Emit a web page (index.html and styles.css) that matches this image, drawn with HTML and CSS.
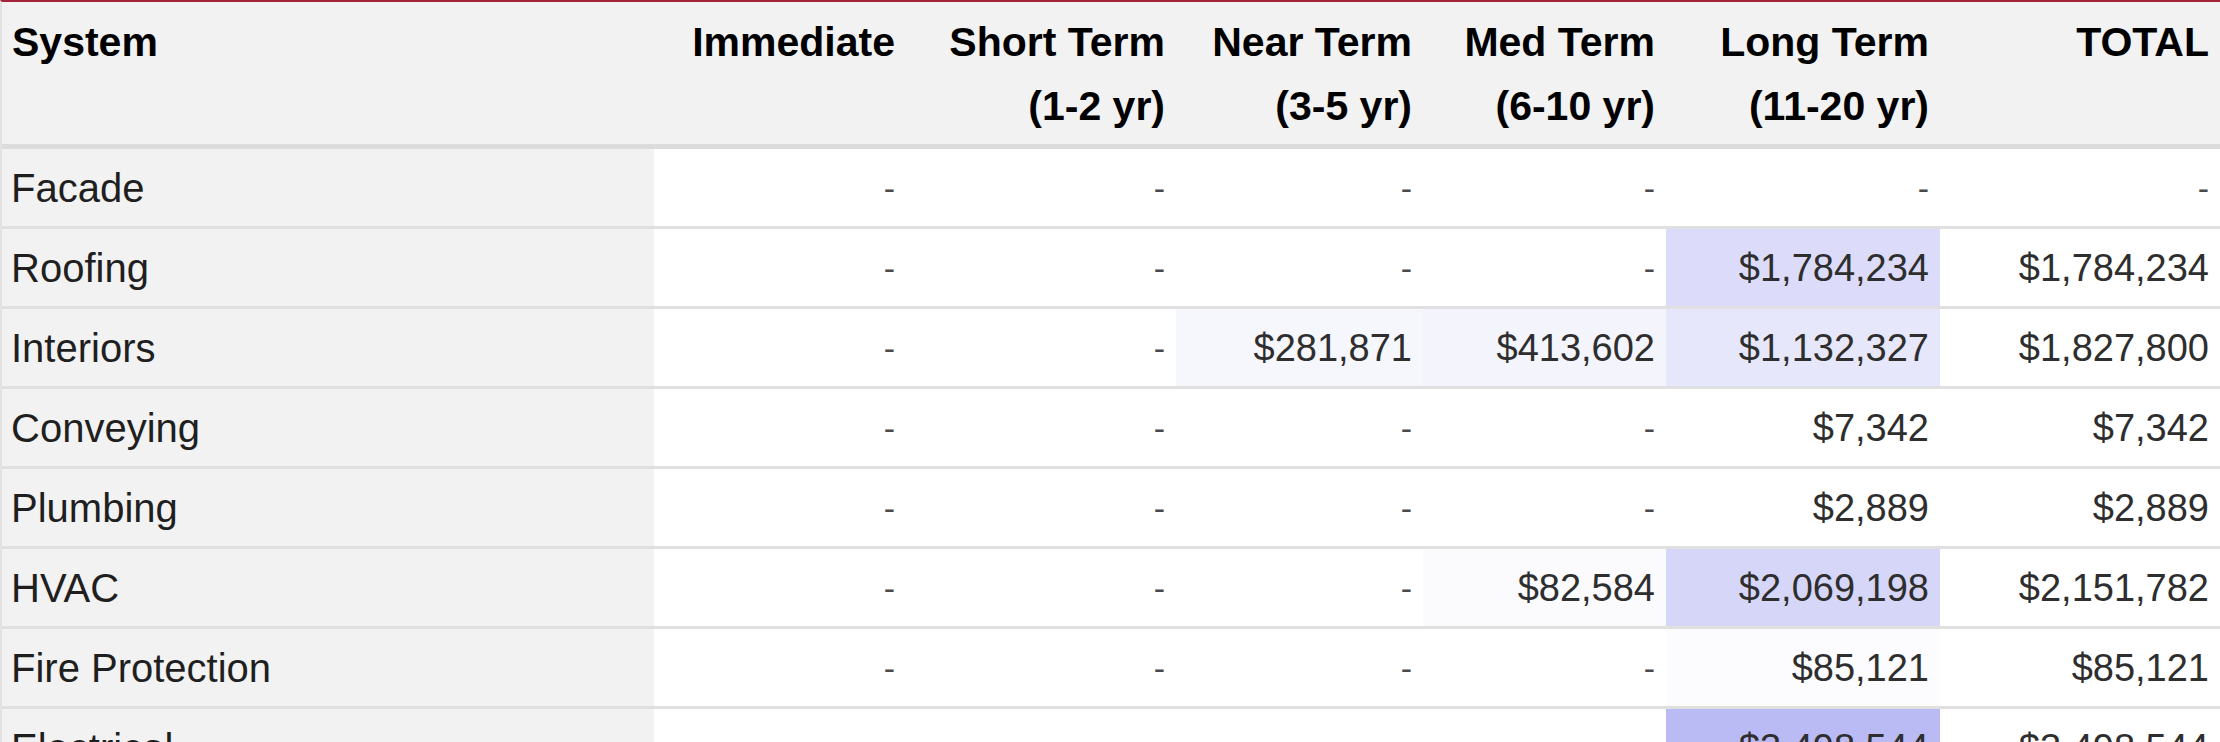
FILE: index.html
```html
<!DOCTYPE html>
<html lang="en">
<head>
<meta charset="utf-8">
<title>Capital Needs by System</title>
<link rel="stylesheet" href="styles.css">
</head>
<body>
<div class="frame">
  <table class="plan">
    <colgroup>
      <col class="c-sys">
      <col class="c-imm">
      <col class="c-short">
      <col class="c-near">
      <col class="c-med">
      <col class="c-long">
      <col class="c-total">
    </colgroup>
    <thead>
      <tr>
        <th class="sys">System</th>
        <th>Immediate</th>
        <th>Short Term<br>(1-2 yr)</th>
        <th>Near Term<br>(3-5 yr)</th>
        <th>Med Term<br>(6-10 yr)</th>
        <th>Long Term<br>(11-20 yr)</th>
        <th>TOTAL</th>
      </tr>
    </thead>
    <tbody>
      <tr>
        <td class="sys">Facade</td>
        <td class="dash">-</td><td class="dash">-</td><td class="dash">-</td><td class="dash">-</td><td class="dash">-</td><td class="dash">-</td>
      </tr>
      <tr>
        <td class="sys">Roofing</td>
        <td class="dash">-</td><td class="dash">-</td><td class="dash">-</td><td class="dash">-</td>
        <td style="background:#dcdcfa">$1,784,234</td>
        <td>$1,784,234</td>
      </tr>
      <tr>
        <td class="sys">Interiors</td>
        <td class="dash">-</td><td class="dash">-</td>
        <td style="background:#f6f6fd">$281,871</td>
        <td style="background:#f4f4fd">$413,602</td>
        <td style="background:#e7e7fb">$1,132,327</td>
        <td>$1,827,800</td>
      </tr>
      <tr>
        <td class="sys">Conveying</td>
        <td class="dash">-</td><td class="dash">-</td><td class="dash">-</td><td class="dash">-</td>
        <td>$7,342</td>
        <td>$7,342</td>
      </tr>
      <tr>
        <td class="sys">Plumbing</td>
        <td class="dash">-</td><td class="dash">-</td><td class="dash">-</td><td class="dash">-</td>
        <td>$2,889</td>
        <td>$2,889</td>
      </tr>
      <tr>
        <td class="sys">HVAC</td>
        <td class="dash">-</td><td class="dash">-</td><td class="dash">-</td>
        <td style="background:#fbfbfe">$82,584</td>
        <td style="background:#d6d6f9">$2,069,198</td>
        <td>$2,151,782</td>
      </tr>
      <tr>
        <td class="sys">Fire Protection</td>
        <td class="dash">-</td><td class="dash">-</td><td class="dash">-</td><td class="dash">-</td>
        <td style="background:#fcfcfe">$85,121</td>
        <td>$85,121</td>
      </tr>
      <tr>
        <td class="sys">Electrical</td>
        <td class="dash">-</td><td class="dash">-</td><td class="dash">-</td><td class="dash">-</td>
        <td style="background:#babaf4">$3,498,544</td>
        <td>$3,498,544</td>
      </tr>
    </tbody>
  </table>
</div>
</body>
</html>
```

FILE: styles.css
```css
html, body {
  margin: 0;
  padding: 0;
  background: #ffffff;
}

body {
  font-family: "Liberation Sans", Arial, Helvetica, sans-serif;
  color: #333333;
}

.frame {
  border-top: 2px solid #a3243b;
  border-left: 2px solid #e2e2e2;
}

.plan {
  border-collapse: collapse;
  table-layout: fixed;
  width: 2218px;
}

.c-sys { width: 652px; }
.c-imm { width: 252px; }
.c-short { width: 270px; }
.c-near { width: 247px; }
.c-med { width: 243px; }
.c-long { width: 274px; }
.c-total { width: 280px; }

.plan th {
  background: #f2f2f2;
  color: #000000;
  font-weight: bold;
  font-size: 41px;
  line-height: 64px;
  text-align: right;
  vertical-align: top;
  padding: 8px 11px 6px 11px;
  border-bottom: 5px solid #dcdcdc;
  white-space: nowrap;
}

.plan th.sys {
  text-align: left;
  padding-left: 10px;
}

.plan td {
  font-size: 38px;
  line-height: 64px;
  text-align: right;
  vertical-align: middle;
  padding: 7px 11px 6px 11px;
  border-bottom: 3px solid #e0e0e0;
  color: #2e2e2e;
  white-space: nowrap;
}

.plan td.sys {
  text-align: left;
  background: #f2f2f2;
  padding-left: 9px;
  font-size: 40px;
  color: #1f1f1f;
}

.plan td.dash {
  color: #4a4a4a;
  font-size: 34px;
}
```
